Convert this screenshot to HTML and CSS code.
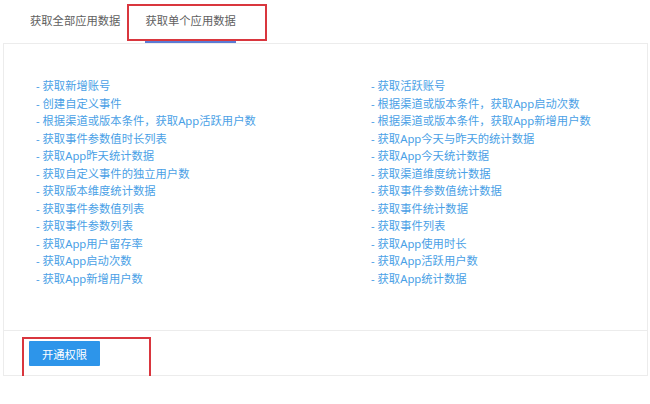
FILE: index.html
```html
<!DOCTYPE html>
<html lang="zh-CN">
<head>
  <meta charset="UTF-8" />
  <meta name="viewport" content="width=device-width, initial-scale=1.0"/>
  <title>获取应用数据</title>
  <link rel="stylesheet" href="styles.css">
</head>
<body>
  <div class="panel">
    <div class="tabs">
      <div class="tab">获取全部应用数据</div>
      <div class="tab active">获取单个应用数据<span class="mark mark-tab"></span></div>
    </div>

    <div class="card">
      <div class="api-list">
        <a href="#">- 获取新增账号</a>
        <a href="#">- 获取活跃账号</a>
        <a href="#">- 创建自定义事件</a>
        <a href="#">- 根据渠道或版本条件，获取App启动次数</a>
        <a href="#">- 根据渠道或版本条件，获取App活跃用户数</a>
        <a href="#">- 根据渠道或版本条件，获取App新增用户数</a>
        <a href="#">- 获取事件参数值时长列表</a>
        <a href="#">- 获取App今天与昨天的统计数据</a>
        <a href="#">- 获取App昨天统计数据</a>
        <a href="#">- 获取App今天统计数据</a>
        <a href="#">- 获取自定义事件的独立用户数</a>
        <a href="#">- 获取渠道维度统计数据</a>
        <a href="#">- 获取版本维度统计数据</a>
        <a href="#">- 获取事件参数值统计数据</a>
        <a href="#">- 获取事件参数值列表</a>
        <a href="#">- 获取事件统计数据</a>
        <a href="#">- 获取事件参数列表</a>
        <a href="#">- 获取事件列表</a>
        <a href="#">- 获取App用户留存率</a>
        <a href="#">- 获取App使用时长</a>
        <a href="#">- 获取App启动次数</a>
        <a href="#">- 获取App活跃用户数</a>
        <a href="#">- 获取App新增用户数</a>
        <a href="#">- 获取App统计数据</a>
      </div>

      <div class="card-foot">
        <button class="btn">开通权限</button>
        <span class="mark mark-btn"></span>
      </div>
    </div>
  </div>
</body>
</html>
```

FILE: styles.css
```css
body { margin:0; background:#fff; font-family:"Noto Sans", "Noto Sans CJK SC", sans-serif; font-size:11.3px; color:#555; }
.panel { margin:0 2px 0 3px; }

.tabs { display:flex; padding-left:14px; border-bottom:1px solid #ececec; }
.tab { position:relative; margin:0 12px 0 13px; line-height:41px; border-bottom:2px solid transparent; color:#606060; }
.tab.active { border-bottom-color:#5b7bd5; }

.mark { position:absolute; border:2px solid #d9363e; box-sizing:border-box; pointer-events:none; }
.mark-tab { left:-18px; top:4px; width:140px; height:37px; }
.mark-btn { left:18px; top:6px; width:129px; height:44px; }

.card { border:1px solid #ececec; border-top:none; }
.api-list { display:grid; grid-template-columns:335px 1fr; padding:33px 0 43px 32px; }
.api-list a { color:#4a9fe6; text-decoration:none; line-height:17.5px; white-space:nowrap; }

.card-foot { position:relative; border-top:1px solid #ececec; padding:10px 0 9px 25px; }
.btn { display:block; width:71px; height:25px; border:none; border-radius:1px; background:#2d95ea; color:#fff; font:inherit; font-size:11.3px; padding:0; cursor:pointer; }
```
